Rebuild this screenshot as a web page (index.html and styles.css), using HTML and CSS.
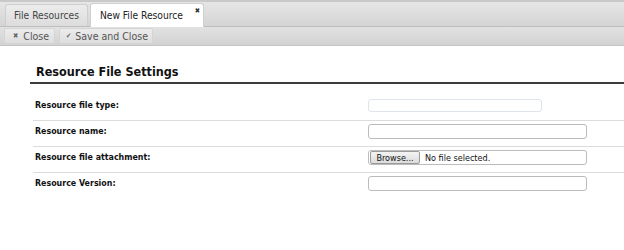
FILE: index.html
```html
<!DOCTYPE html>
<html>
<head>
<meta charset="utf-8">
<link rel="stylesheet" href="styles.css">
</head>
<body>
<div class="tabbar">
  <div class="tab">File Resources</div>
  <div class="tab active">New File Resource<span class="tab-close">&#x2716;</span></div>
</div>
<div class="toolbar">
  <button class="tbtn"><span class="ico">&#x2716;</span>Close</button>
  <button class="tbtn"><span class="ico">&#x2714;</span>Save and Close</button>
</div>
<div class="content">
  <h2 class="title">Resource File Settings</h2>
  <div class="rows">
    <div class="row">
      <label class="lbl">Resource file type:</label>
      <div class="field"><div class="inp inp-short"></div></div>
    </div>
    <div class="row">
      <label class="lbl">Resource name:</label>
      <div class="field"><div class="inp"></div></div>
    </div>
    <div class="row">
      <label class="lbl">Resource file attachment:</label>
      <div class="field"><div class="inp file"><span class="browse">Browse...</span><span class="nofile">No file selected.</span></div></div>
    </div>
    <div class="row last">
      <label class="lbl">Resource Version:</label>
      <div class="field"><div class="inp"></div></div>
    </div>
  </div>
</div>
</body>
</html>
```
FILE: styles.css
```css
* { box-sizing: border-box; }
body {
  margin: 0;
  background: #fff;
  font-family: "DejaVu Sans Condensed", "DejaVu Sans", Verdana, sans-serif;
  color: #222;
}
.tabbar {
  height: 27px;
  background: linear-gradient(#e6e6e6, #d4d4d4);
  border-top: 2px solid #c9c9c9;
  display: flex;
  align-items: flex-end;
  padding-left: 5px;
  gap: 2px;
  border-bottom: 1px solid #bdbdbd;
}
.tab {
  position: relative;
  height: 22px;
  padding: 0 8px;
  display: flex;
  align-items: center;
  font-size: 10.2px;
  color: #444;
  background: linear-gradient(#ececec, #dcdcdc);
  border: 1px solid #cfcfcf;
  border-bottom: none;
  border-radius: 3px 3px 0 0;
}
.tab.active {
  height: 24px;
  background: #fff;
  color: #222;
  padding: 0 20px 0 9px;
  margin-bottom: -1px;
}
.tab-close {
  position: absolute;
  right: 3px;
  top: 3px;
  font-size: 7px;
  color: #333;
}
.toolbar {
  height: 19px;
  background: linear-gradient(#e2e2e2, #d2d2d2);
  border-bottom: 1px solid #c4c4c4;
  display: flex;
  gap: 4px;
  padding: 1px 0 0 4px;
}
.tbtn {
  font-family: inherit;
  font-size: 10.5px;
  color: #555;
  height: 16px;
  padding: 0 5px 0 8px;
  border: 1px solid #d4d4d4;
  background: linear-gradient(#ececec, #dedede);
  border-radius: 2px;
  display: flex;
  align-items: center;
  gap: 5px;
}
.tbtn + .tbtn { padding: 0 4px 0 6px; gap: 4px; }
.ico { font-size: 7px; color: #666; }
.content {
  padding: 0 0 0 30px;
}
.title {
  margin: 18px 0 0 0;
  padding: 0 0 2px 6px;
  font-size: 12.5px;
  font-weight: bold;
  color: #111;
  border-bottom: 2px solid #3c3c3c;
  line-height: 16px;
}
.rows {
  margin-top: 11px;
  margin-left: 3px;
}
.row {
  display: flex;
  align-items: flex-start;
  height: 26px;
  padding-top: 3px;
  border-bottom: 1px solid #dcdcdc;
}
.row.last { border-bottom: none; }
.lbl {
  width: 335px;
  padding-left: 2px;
  font-size: 8.8px;
  line-height: 15px;
  font-weight: bold;
  color: #111;
}
.field { flex: 1; }
.inp {
  width: 219px;
  height: 15px;
  border: 1px solid #bcbcbc;
  border-radius: 3px;
  background: #fff;
}
.inp-short {
  width: 174px;
  height: 13px;
  margin-top: 1px;
  border-color: #dfe3ea;
}
.inp.file {
  display: flex;
  align-items: center;
  padding-left: 1px;
  gap: 5px;
}
.browse {
  height: 13px;
  width: 50px;
  border: 1px solid #9a9a9a;
  border-radius: 2px;
  background: linear-gradient(#f4f4f4, #dcdcdc);
  font-size: 9px;
  display: flex;
  align-items: center;
  justify-content: center;
  color: #111;
}
.nofile { font-size: 9px; color: #111; }
```
